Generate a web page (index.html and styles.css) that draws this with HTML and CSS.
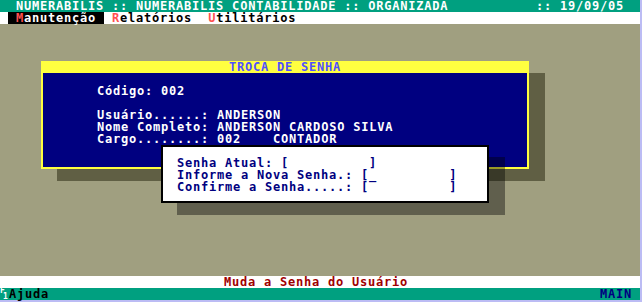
FILE: index.html
```html
<!DOCTYPE html>
<html lang="pt">
<head>
<meta charset="utf-8">
<title>Numerabilis</title>
<link rel="stylesheet" href="styles.css">
</head>
<body>
<div class="screen">
  <div class="row topbar">
    <span>NUMERABILIS :: NUMERABILIS CONTABILIDADE :: ORGANIZADA</span>
    <span>:: 19/09/05</span>
  </div>
  <div class="row menubar">
    <span class="menu-item active"><span class="hot">M</span>anutenção</span><span class="menu-item"><span class="hot">R</span>elatórios</span><span class="menu-item"><span class="hot">U</span>tilitários</span>
  </div>
  <div class="desktop"></div>
  <div class="row status"><span>Muda a Senha do Usuário</span></div>
  <div class="row keybar">
    <span class="key"><span class="fkey"><span class="fk-f">F</span><span class="fk-n">1</span></span>Ajuda</span>
    <span class="mode">MAIN</span>
  </div>

  <div class="dialog">
    <div class="dialog-title">TROCA DE SENHA</div>
    <div class="dialog-body">
      <div class="line code">Código: 002</div>
      <div class="line">Usuário......: ANDERSON</div>
      <div class="line">Nome Completo: ANDERSON CARDOSO SILVA</div>
      <div class="line">Cargo........: 002    CONTADOR</div>
    </div>
  </div>

  <div class="pwbox">
    <div class="line">Senha Atual: [          ]</div>
    <div class="line">Informe a Nova Senha.: [_         ]</div>
    <div class="line">Confirme a Senha.....: [          ]</div>
  </div>
</div>
</body>
</html>
```

FILE: styles.css
```css
html, body {
  margin: 0;
  padding: 0;
}
body {
  background: #bcbcf4;
  width: 642px;
  height: 302px;
  overflow: hidden;
  font-family: "DejaVu Sans Mono", "Liberation Mono", monospace;
  font-weight: bold;
  font-size: 12px;
  letter-spacing: 0.78px;
}
.screen {
  position: relative;
  width: 640px;
  height: 300px;
  background: #a09f80;
  display: flex;
  flex-direction: column;
}
.row {
  height: 12px;
  line-height: 12px;
  white-space: pre;
  display: flex;
  flex: none;
}
.topbar {
  background: #00a080;
  color: #ffffff;
  justify-content: space-between;
  padding: 0 16px;
}
.menubar {
  background: #ffffff;
  color: #000000;
  padding-left: 8px;
}
.menu-item {
  padding: 0 8px;
}
.menu-item.active {
  background: #000000;
  color: #ffffff;
}
.hot {
  display: inline-block;
  height: 12px;
  vertical-align: top;
  color: #ff5050;
}
.desktop {
  flex: 1;
}
.status {
  background: #ffffff;
  color: #a00000;
  justify-content: center;
  padding-right: 8px;
}
.keybar {
  background: #00a080;
  color: #000000;
  justify-content: space-between;
  padding-right: 8px;
}
.fkey {
  display: inline-block;
  position: relative;
  width: 9px;
  height: 12px;
  vertical-align: top;
  color: #ffffff;
  font-size: 8px;
  line-height: 6px;
  letter-spacing: 0;
}
.fk-f {
  position: absolute;
  left: 0;
  top: 0;
}
.fk-n {
  position: absolute;
  left: 3px;
  top: 6px;
}
.mode {
  color: #000080;
}
.line {
  height: 12px;
  line-height: 12px;
  white-space: pre;
}
.dialog {
  position: absolute;
  left: 41px;
  top: 61px;
  width: 488px;
  height: 108px;
  box-sizing: border-box;
  background: #ffff40;
  padding: 0 2px 2px 2px;
  display: flex;
  flex-direction: column;
  box-shadow: 16px 12px 0 #605f44;
}
.dialog-title {
  height: 12px;
  line-height: 12px;
  text-align: center;
  color: #5050ff;
  white-space: pre;
}
.dialog-body {
  flex: 1;
  background: #000080;
  color: #ffffff;
  padding: 12px 0 0 54px;
}
.dialog-body .code {
  margin-bottom: 12px;
}
.pwbox {
  position: absolute;
  left: 161px;
  top: 145px;
  width: 328px;
  height: 58px;
  box-sizing: border-box;
  background: #ffffff;
  border: 2px solid #000000;
  color: #000080;
  padding: 10px 0 0 14px;
  box-shadow: 16px 12px 0 rgba(0, 0, 0, 0.4);
}
```
